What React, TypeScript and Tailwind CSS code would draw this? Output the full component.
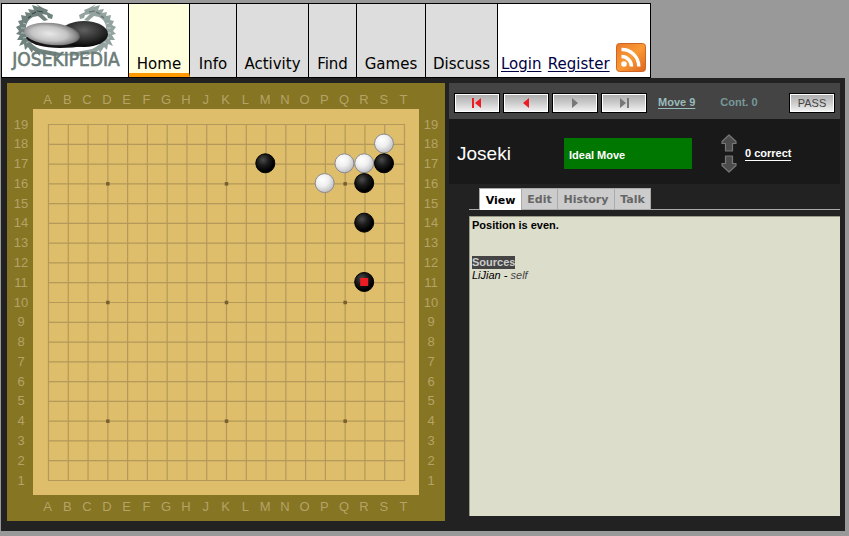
import React from "react";

const COLUMNS = "ABCDEFGHJKLMNOPQRST".split("");
const STEP = 356 / 18;
const ORIGIN = 41.5;
const at = (i: number) => ORIGIN + i * STEP;

const STONES = [
  { col: "S", row: 18, color: "white" },
  { col: "Q", row: 17, color: "white" },
  { col: "R", row: 17, color: "white" },
  { col: "P", row: 16, color: "white" },
  { col: "M", row: 17, color: "black" },
  { col: "S", row: 17, color: "black" },
  { col: "R", row: 16, color: "black" },
  { col: "R", row: 14, color: "black" },
  { col: "R", row: 11, color: "black", last: true },
];

const NAV = [
  { label: "Home", width: "w-[61px]" },
  { label: "Info", width: "w-[47px]" },
  { label: "Activity", width: "w-[72px]" },
  { label: "Find", width: "w-[48px]" },
  { label: "Games", width: "w-[69px]" },
  { label: "Discuss", width: "w-[72px]" },
];

const TABS = [
  { label: "View", width: "w-[43px]" },
  { label: "Edit", width: "w-[36px]" },
  { label: "History", width: "w-[57px]" },
  { label: "Talk", width: "w-[36px]" },
];

function Dragon({ color, shade }: { color: string; shade: string }) {
  return (
    <g>
      <path
        d="M30 1 L37 3 L34 0 L41 4 L46 6 L45 8 L51 11 L50 15 L46 14 L45 11 L40 10 L46 16 L42 17 L36 12 L31 13 C27 15 25 18 24 22 C23 32 27 40 38 45 L54 48 L68 51 L52 52 L42 50 L46 53 L37 49 L38 52 L31 46 L30 49 L26 43 L23 46 L22 40 L17 42 L20 36 L15 36 L18 31 L14 30 L17 27 L14 23 L18 21 L16 17 L20 16 L19 11 L24 12 L23 8 L28 9 L26 5 L32 6 Z"
        fill={color}
      />
      <path d="M35 7 L41 8 M30 10 L34 8 M26 14 L29 12" fill="none" stroke={shade} strokeWidth="1.2" />
      <path d="M21 19 L24 20 M19 24 L23 24 M19 29 L23 29 M21 34 L25 33 M24 39 L28 37" stroke="#ffffff" strokeOpacity="0.45" />
    </g>
  );
}

function Logo() {
  return (
    <svg viewBox="0 0 126 73" className="h-[73px] w-[126px]" role="img" aria-label="Josekipedia">
      <defs>
        <radialGradient id="pebbleLight" cx="45%" cy="50%" r="58%">
          <stop offset="0" stopColor="#e8e8e8" />
          <stop offset="0.55" stopColor="#c4c4c4" />
          <stop offset="0.85" stopColor="#858585" />
          <stop offset="1" stopColor="#4a4a4a" />
        </radialGradient>
        <radialGradient id="pebbleDark" cx="50%" cy="35%" r="65%">
          <stop offset="0" stopColor="#606060" />
          <stop offset="0.55" stopColor="#303030" />
          <stop offset="1" stopColor="#050505" />
        </radialGradient>
      </defs>
      <Dragon color="#6f827d" shade="#3d4b47" />
      <g transform="translate(128 0) scale(-1 1)">
        <Dragon color="#93a39f" shade="#5f706b" />
      </g>
      <path d="M24 34 C32 44 54 46 84 42 L80 28 L30 28 Z" fill="#151515" />
      <ellipse cx="82" cy="30" rx="24" ry="13" fill="url(#pebbleDark)" />
      <ellipse cx="50" cy="30" rx="28" ry="11" transform="rotate(6 50 30)" fill="url(#pebbleLight)" />
      <text
        x="64"
        y="62"
        textAnchor="middle"
        fontSize="19"
        fill="#6b7c77"
        stroke="#6b7c77"
        strokeWidth="0.6"
        fontFamily="'DejaVu Sans Condensed', 'DejaVu Sans', sans-serif"
      >
        JOSEKIPEDIA
      </text>
    </svg>
  );
}

function RssIcon() {
  return (
    <svg viewBox="0 0 30 29" className="h-[29px] w-[30px]" role="img" aria-label="RSS feed">
      <defs>
        <linearGradient id="rss" x1="0" y1="0" x2="1" y2="1">
          <stop offset="0" stopColor="#e8792b" />
          <stop offset="0.5" stopColor="#f99a35" />
          <stop offset="1" stopColor="#dd6520" />
        </linearGradient>
      </defs>
      <rect x="0.5" y="0.5" width="29" height="28" rx="3" fill="url(#rss)" stroke="#cf6423" />
      <circle cx="8" cy="21" r="2.8" fill="#fff" />
      <path d="M5.5 13.5 A10 10 0 0 1 15.5 23.5 M5.5 6.5 A17 17 0 0 1 22.8 23.5" fill="none" stroke="#fff" strokeWidth="3.4" />
    </svg>
  );
}

function Board() {
  return (
    <svg
      viewBox="0 0 438 438"
      className="h-[438px] w-[438px] shrink-0 bg-[#867522]"
      role="img"
      aria-label="Go board"
      fontFamily="'Liberation Sans', Arial, sans-serif"
      fontSize="13"
    >
      <defs>
        <radialGradient id="blackStone" cx="38%" cy="32%" r="60%">
          <stop offset="0" stopColor="#4c4c4c" />
          <stop offset="0.5" stopColor="#1c1c1c" />
          <stop offset="1" stopColor="#000" />
        </radialGradient>
        <radialGradient id="whiteStone" cx="38%" cy="32%" r="68%">
          <stop offset="0" stopColor="#fff" />
          <stop offset="0.5" stopColor="#efefef" />
          <stop offset="1" stopColor="#c0c0c4" />
        </radialGradient>
      </defs>
      <rect x="26" y="26" width="386" height="386" fill="#debd6b" />
      <g stroke="#b4995a" strokeWidth="1.2">
        {COLUMNS.map((c, i) => (
          <g key={c}>
            <line x1={at(i)} x2={at(i)} y1={41} y2={398} />
            <line y1={at(i)} y2={at(i)} x1={41} x2={398} />
          </g>
        ))}
      </g>
      {[3, 9, 15].flatMap((x) =>
        [3, 9, 15].map((y) => (
          <rect key={`${x}-${y}`} x={at(x) - 1.75} y={at(y) - 1.75} width="3.5" height="3.5" fill="#77602f" />
        )),
      )}
      <g fill="#b5a368" textAnchor="middle">
        {COLUMNS.map((c, i) => (
          <g key={c}>
            <text x={at(i) - 1} y={21}>{c}</text>
            <text x={at(i) - 1} y={428}>{c}</text>
            <text x={14} y={at(i) + 4}>{19 - i}</text>
            <text x={424} y={at(i) + 4}>{19 - i}</text>
          </g>
        ))}
      </g>
      {STONES.map((s) => {
        const cx = at(COLUMNS.indexOf(s.col)) - 0.75;
        const cy = at(19 - s.row) - 0.75;
        return (
          <g key={s.col + s.row}>
            <circle
              cx={cx}
              cy={cy}
              r="9.5"
              fill={s.color === "white" ? "url(#whiteStone)" : "url(#blackStone)"}
              stroke={s.color === "white" ? "#8a8a8e" : "#000"}
            />
            {s.last && <rect x={cx - 4} y={cy - 4} width="8" height="8" fill="#ed1c24" />}
          </g>
        );
      })}
    </svg>
  );
}

function ToolButton({ label, children }: { label: string; children: React.ReactNode }) {
  return (
    <button
      type="button"
      aria-label={label}
      className="flex h-5 w-[46px] shrink-0 items-center justify-center border border-black bg-linear-to-b from-[#aaaaaa] via-[#cccccc] to-[#f4f4f4] text-[11px] leading-3 text-[#444] shadow-[inset_0_0_0_1px_#ffffff]"
    >
      {children}
    </button>
  );
}

function Arrow({ color, bar, flip }: { color: string; bar?: boolean; flip?: boolean }) {
  return (
    <svg viewBox="0 0 12 12" className={flip ? "size-3 -scale-x-100" : "size-3"} aria-hidden="true">
      <path d={bar ? "M10 1 V11 L4 6 Z" : "M9 1 V11 L3 6 Z"} fill={color} />
      {bar && <rect x="1" y="1" width="2" height="10" fill={color} />}
    </svg>
  );
}

function VoteArrow({ down }: { down?: boolean }) {
  return (
    <svg viewBox="0 0 16 18" className={down ? "h-[18px] w-4 rotate-180" : "h-[18px] w-4"} aria-hidden="true">
      <path d="M8 1 L15 7.5 V9.5 H11.5 V17 H4.5 V9.5 H1 V7.5 Z" fill="#4c4c4c" stroke="#777" strokeWidth="1.2" strokeLinejoin="round" />
    </svg>
  );
}

export default function App() {
  return (
    <div className="min-h-screen bg-[#999999] pt-[3px] pr-1 pb-[5px] pl-px font-['Liberation_Sans',Arial,sans-serif]">
      <header className="flex h-[75px] w-fit border border-black bg-white font-['DejaVu_Sans',Verdana,sans-serif] text-[15px] leading-[18px]">
        <a href="#home" className="block w-[127px] border-r border-black">
          <Logo />
        </a>
        <nav className="flex">
          {NAV.map((item, i) => (
            <a
              key={item.label}
              href={`#${item.label}`}
              className={`flex items-end justify-center border-r border-black text-black ${item.width} ${
                i === 0 ? "border-b-4 border-b-[#ff9900] bg-[#ffffdd]" : "bg-[#dddddd] pb-1"
              }`}
            >
              {item.label}
            </a>
          ))}
        </nav>
        <div className="flex w-[152px] items-end justify-between pr-1 pb-1 pl-[3px] text-[#000044]">
          <a href="#login" className="underline underline-offset-2">Login</a>
          <a href="#register" className="underline underline-offset-2">Register</a>
          <a href="#rss" className="pb-px"><RssIcon /></a>
        </div>
      </header>

      <main className="flex gap-1 bg-[#222222] pt-[5px] pr-[5px] pb-[10px] pl-[6px]">
        <Board />
        <section className="flex min-w-0 flex-1 flex-col">
          <div className="flex h-9 items-center bg-[#444444] pt-1 pr-[5px] pl-[5px] text-[11px] font-bold">
            <div className="flex gap-[3px]">
              <ToolButton label="First move"><Arrow color="#ed1c24" bar /></ToolButton>
              <ToolButton label="Previous move"><Arrow color="#ed1c24" /></ToolButton>
              <ToolButton label="Next move"><Arrow color="#777777" flip /></ToolButton>
              <ToolButton label="Last move"><Arrow color="#777777" bar flip /></ToolButton>
            </div>
            <a href="#move" className="ml-[11px] pb-[2px] text-[#99bbbb] underline underline-offset-2">Move 9</a>
            <span className="ml-[25px] pb-[2px] text-[#779999]">Cont. 0</span>
            <span className="ml-auto font-normal">
              <ToolButton label="Pass">PASS</ToolButton>
            </span>
          </div>

          <div className="flex h-[65px] items-center bg-[#191919] pt-1 pl-2 text-[11px] font-bold text-white">
            <h1 className="w-[107px] text-[19px] leading-6 font-normal">Joseki</h1>
            <div className="flex h-[31px] w-32 items-center bg-[#007700] pt-1 pl-[5px]">Ideal Move</div>
            <div className="ml-[29px] flex flex-col gap-[3px]">
              <button type="button" aria-label="Vote up"><VoteArrow /></button>
              <button type="button" aria-label="Vote down"><VoteArrow down /></button>
            </div>
            <a href="#votes" className="ml-2 border-b border-white leading-[13px]">0 correct</a>
          </div>

          <div role="tablist" className="mt-1 ml-5 flex h-[22px] border-b border-[#aaaaaa] pl-[10px] font-['DejaVu_Sans',Verdana,sans-serif] text-[11px] font-bold">
            {TABS.map((tab, i) => (
              <button
                key={tab.label}
                type="button"
                role="tab"
                aria-selected={i === 0}
                className={`border-t border-r border-[#aaaaaa] ${tab.width} ${
                  i === 0 ? "h-[22px] border-l bg-white pt-1 text-black" : "h-[21px] bg-[#cccccc] pt-[3px] text-[#666666]"
                }`}
              >
                {tab.label}
              </button>
            ))}
          </div>

          <article className="mt-[6px] mb-[5px] ml-5 flex-1 border-t border-l border-[#999988] bg-[#ddddcc] pt-[2px] pl-[2px] text-[11px] leading-[13px] text-black">
            <p className="font-bold">Position is even.</p>
            <h2 className="mt-6 w-fit bg-[#444444] font-bold text-[#cccccc]">Sources</h2>
            <p className="italic">LiJian - <span className="text-[#444444]">self</span></p>
          </article>
        </section>
      </main>
    </div>
  );
}
